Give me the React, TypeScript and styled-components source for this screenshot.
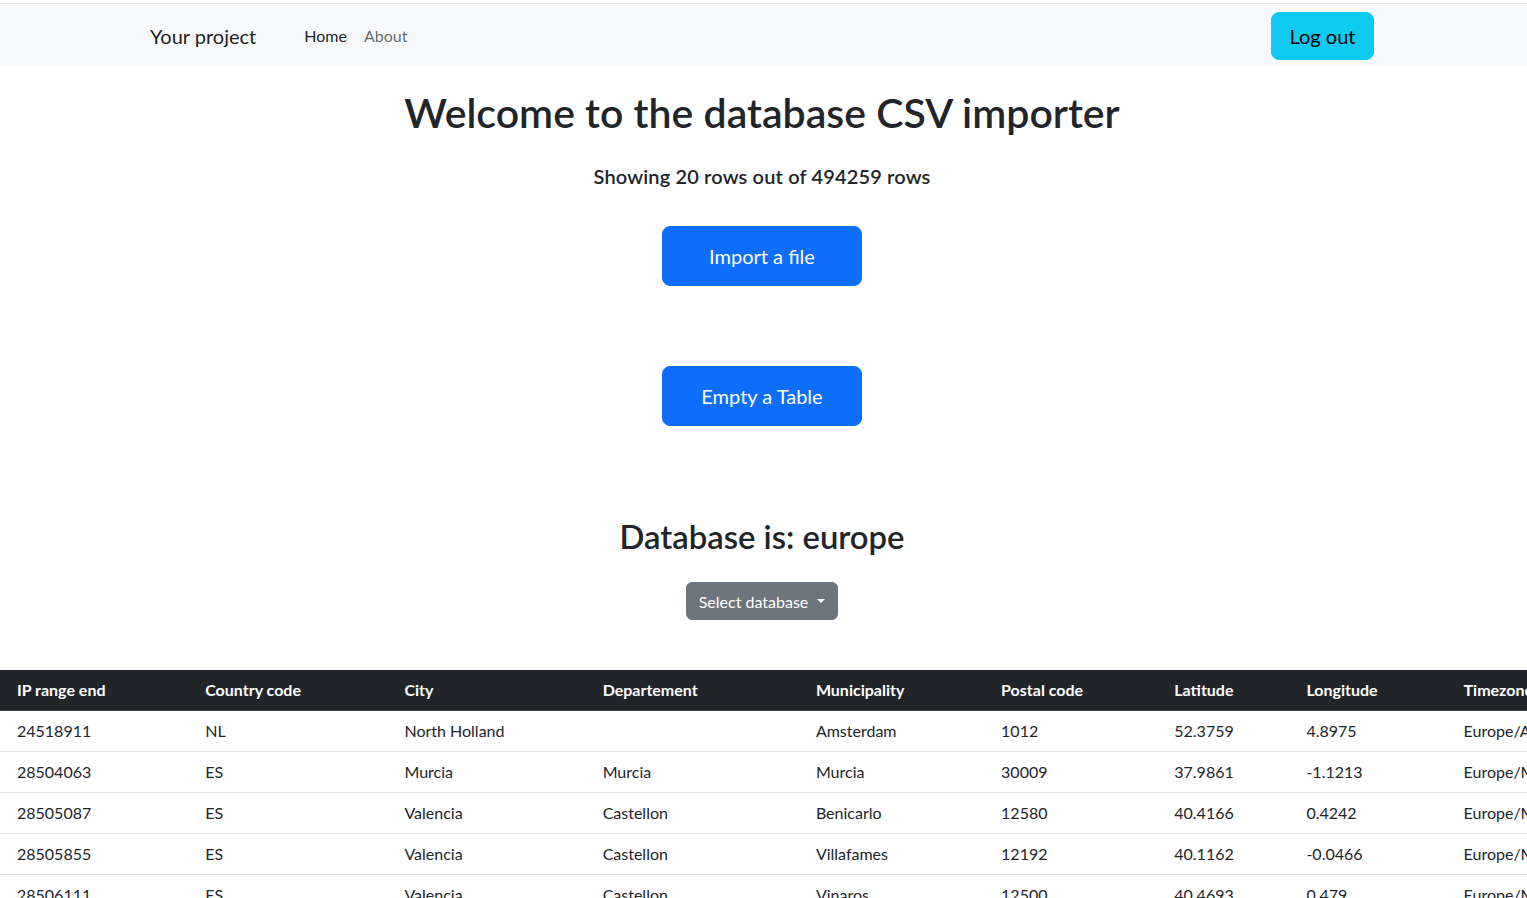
import React from "react";
import styled, { createGlobalStyle } from "styled-components";

const FONT = `"Segoe UI", Lato, "Noto Sans", "Liberation Sans", sans-serif`;

const Global = createGlobalStyle`
  * { box-sizing: border-box; }
  html, body { margin: 0; padding: 0; }
  body {
    font-family: ${FONT};
    font-size: 16px;
    line-height: 1.5;
    color: #212529;
    background: #fff;
    overflow-x: hidden;
  }
`;

const Page = styled.div`
  padding-top: 3px;
`;

const NavBar = styled.nav`
  border-top: 1px solid #e2e3e5;
  background: #f8f9fa;
  height: 64px;
  padding: 0 153px 0 150px;
  display: flex;
  align-items: center;
`;

const Brand = styled.a`
  font-size: 20px;
  color: rgba(0, 0, 0, 0.9);
  text-decoration: none;
  margin-right: 48px;
`;

const NavLinks = styled.div`
  display: flex;
  gap: 17px;
  flex: 1;
  padding-top: 1px;
`;

const NavLink = styled.a<{ $active?: boolean }>`
  font-size: 16px;
  color: ${(p) => (p.$active ? "rgba(0,0,0,0.9)" : "rgba(0,0,0,0.6)")};
  text-decoration: none;
`;

const LogOut = styled.button`
  font-family: ${FONT};
  font-size: 20px;
  color: #000;
  background: #0dcaf0;
  border: 1px solid #0dcaf0;
  border-radius: 8px;
  width: 103px;
  height: 48px;
  padding: 0;
`;

const Hero = styled.section`
  display: flex;
  flex-direction: column;
  align-items: center;
  padding-right: 3px;
`;

const Title = styled.h1`
  font-size: 41px;
  font-weight: 600;
  line-height: 48px;
  margin: 22px 0 0;
`;

const Count = styled.h5`
  font-size: 20px;
  font-weight: 600;
  line-height: 24px;
  letter-spacing: 0.15px;
  margin: 27px 0 0;
`;

const BigButton = styled.button<{ $top: number }>`
  font-family: ${FONT};
  font-size: 20px;
  color: #fff;
  background: #0d6efd;
  border: 1px solid #0d6efd;
  border-radius: 8px;
  width: 200px;
  height: 60px;
  margin-top: ${(p) => p.$top}px;
`;

const DbTitle = styled.h2`
  font-size: 32.8px;
  font-weight: 600;
  line-height: 38px;
  margin: 92px 0 0;
`;

const SelectButton = styled.button`
  font-family: ${FONT};
  font-size: 16px;
  color: #fff;
  background: #6c757d;
  border: 1px solid #6c757d;
  border-radius: 6px;
  height: 38px;
  padding: 0 12px;
  margin-top: 26px;
  display: flex;
  align-items: center;
  gap: 8px;
`;

const Caret = styled.span`
  width: 0;
  height: 0;
  border-top: 4.5px solid #fff;
  border-left: 4.5px solid transparent;
  border-right: 4.5px solid transparent;
  margin-left: 1px;
`;

const TableWrap = styled.div`
  width: 100%;
  overflow: hidden;
  margin-top: 50px;
`;

const Table = styled.table`
  border-collapse: collapse;
  table-layout: fixed;
  width: 1800px;
`;

const Th = styled.th`
  background: #212529;
  color: #fff;
  font-weight: 700;
  text-align: left;
  height: 40px;
  padding: 0 8px 0 17px;
  white-space: nowrap;
  border-bottom: 1px solid #373b3e;
`;

const Td = styled.td`
  height: 41px;
  padding: 0 8px 0 17px;
  border-bottom: 1px solid #dee2e6;
  white-space: nowrap;
`;

const cols: [string, number][] = [
  ["IP range end", 188],
  ["Country code", 199],
  ["City", 198],
  ["Departement", 213],
  ["Municipality", 185],
  ["Postal code", 173],
  ["Latitude", 132],
  ["Longitude", 157],
  ["Timezone", 200],
  ["Source", 153],
];

const rows = [
  ["24518911", "NL", "North Holland", "", "Amsterdam", "1012", "52.3759", "4.8975", "Europe/Amsterdam", ""],
  ["28504063", "ES", "Murcia", "Murcia", "Murcia", "30009", "37.9861", "-1.1213", "Europe/Madrid", ""],
  ["28505087", "ES", "Valencia", "Castellon", "Benicarlo", "12580", "40.4166", "0.4242", "Europe/Madrid", ""],
  ["28505855", "ES", "Valencia", "Castellon", "Villafames", "12192", "40.1162", "-0.0466", "Europe/Madrid", ""],
  ["28506111", "ES", "Valencia", "Castellon", "Vinaros", "12500", "40.4693", "0.479", "Europe/Madrid", ""],
  ["28506623", "ES", "Valencia", "Castellon", "Vinaros", "12500", "40.4693", "0.479", "Europe/Madrid", ""],
];

export default function App() {
  return (
    <Page>
      <Global />
      <NavBar>
        <Brand href="#">Your project</Brand>
        <NavLinks>
          <NavLink $active href="#">Home</NavLink>
          <NavLink href="#">About</NavLink>
        </NavLinks>
        <LogOut>Log out</LogOut>
      </NavBar>
      <main>
        <Hero>
          <Title>Welcome to the database CSV importer</Title>
          <Count>Showing 20 rows out of 494259 rows</Count>
          <BigButton $top={38}>Import a file</BigButton>
          <BigButton $top={80}>Empty a Table</BigButton>
          <DbTitle>Database is: europe</DbTitle>
          <SelectButton>
            Select database <Caret />
          </SelectButton>
        </Hero>
        <TableWrap>
          <Table>
            <colgroup>
              {cols.map(([n, w]) => (
                <col key={n} style={{ width: w }} />
              ))}
            </colgroup>
            <thead>
              <tr>
                {cols.map(([n]) => (
                  <Th key={n}>{n}</Th>
                ))}
              </tr>
            </thead>
            <tbody>
              {rows.map((r, i) => (
                <tr key={i}>
                  {r.map((c, j) => (
                    <Td key={j}>{c}</Td>
                  ))}
                </tr>
              ))}
            </tbody>
          </Table>
        </TableWrap>
      </main>
    </Page>
  );
}
